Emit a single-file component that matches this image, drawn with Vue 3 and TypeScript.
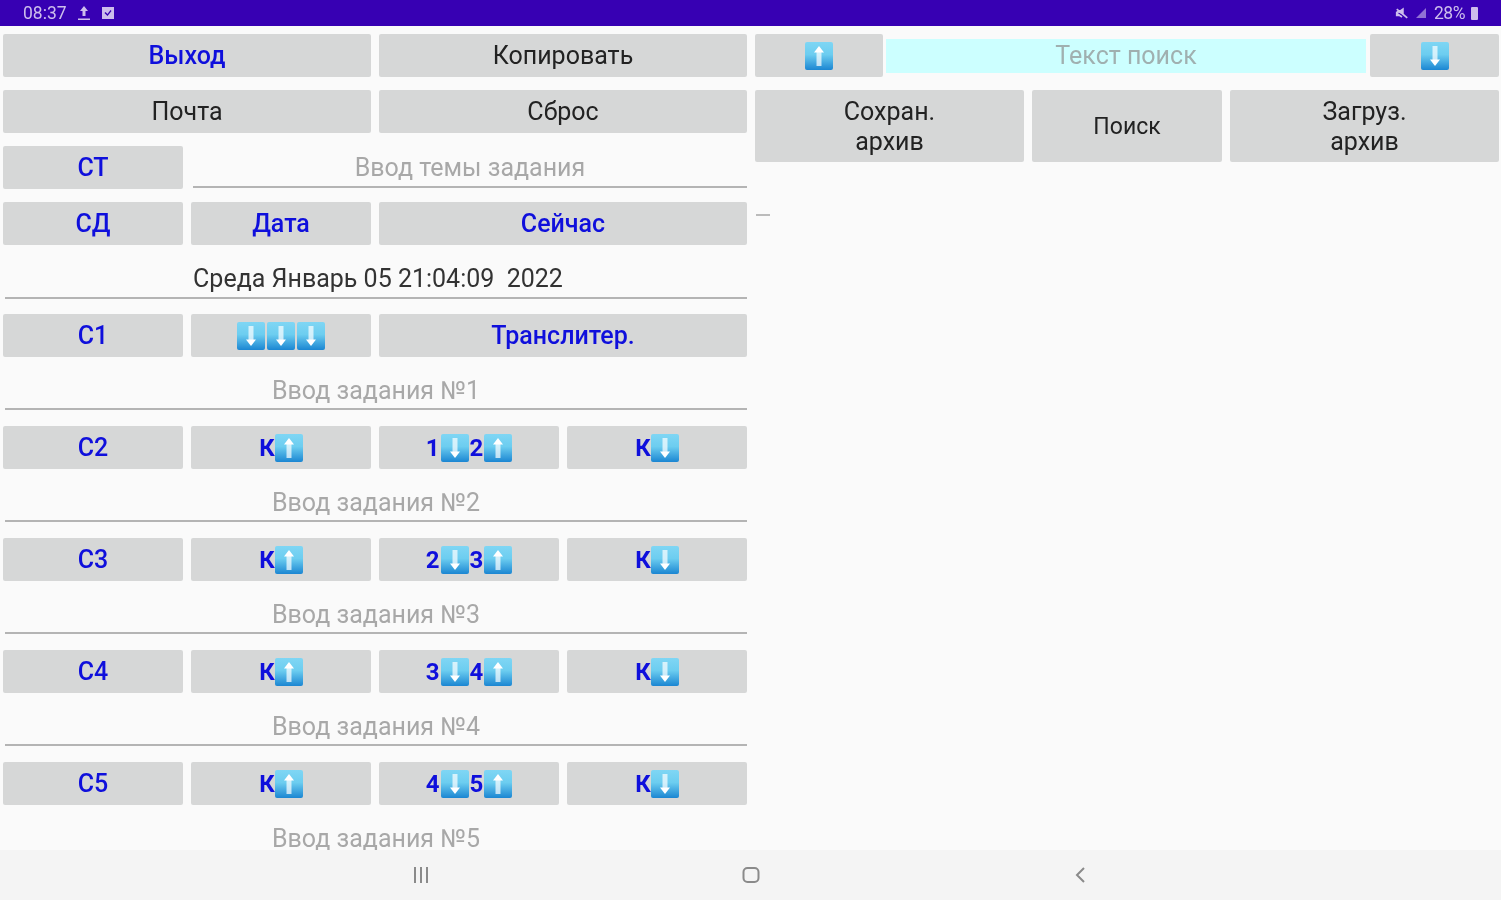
<script setup lang="ts">
interface TaskRow {
  n: number
  from: number
  to: number
}

const tasks: TaskRow[] = [
  { n: 2, from: 1, to: 2 },
  { n: 3, from: 2, to: 3 },
  { n: 4, from: 3, to: 4 },
  { n: 5, from: 4, to: 5 }
]

// shaft and head of the blue arrow tiles
const downShaft = 'M11.5 4h5v14h-5z'
const downHead = 'M14 24l-5-6.500h10z'
const upShaft = 'M11.5 10h5v14h-5z'
const upHead = 'M14 4l5 6.500H9z'
</script>

<template>
  <div class="screen">
    <header class="status">
      <div class="status-left">
        <span>08:37</span>
        <svg viewBox="0 0 14 16" width="14" height="16">
          <path d="M7 1 3 6h2.500v5h3V6H11zM1 13.500h12V15H1z" fill="currentColor" />
        </svg>
        <svg viewBox="0 0 14 14" width="14" height="14">
          <path fill-rule="evenodd" d="M1 1h12v12H1zM3.500 7l1-1 2 2 3-4 1 1-4 5z" fill="currentColor" />
        </svg>
      </div>
      <div class="status-right">
        <svg viewBox="0 0 16 14" width="14" height="13">
          <path d="M2 2 14 12M2 5h3l4-3v6M2 5v4h3l3 2" stroke="currentColor" stroke-width="2" fill="currentColor" />
        </svg>
        <svg class="dim" viewBox="0 0 12 12" width="12" height="12">
          <path d="M11 1v10H1z" fill="currentColor" />
        </svg>
        <span class="pct">28%</span>
        <span class="battery"></span>
      </div>
    </header>

    <main class="content">
      <section class="left">
        <button class="btn blue span2">Выход</button>
        <button class="btn span2">Копировать</button>
        <button class="btn span2">Почта</button>
        <button class="btn span2">Сброс</button>

        <button class="btn blue">СТ</button>
        <div class="field span3 topic">Ввод темы задания</div>

        <button class="btn blue">СД</button>
        <button class="btn blue">Дата</button>
        <button class="btn blue span2">Сейчас</button>
        <div class="field span4 date">Среда Январь 05 21:04:09&nbsp; 2022</div>

        <button class="btn blue">С1</button>
        <button class="btn triple">
          <i v-for="k in 3" :key="k" class="arrow">
            <svg viewBox="0 0 28 28"><path class="shaft" :d="downShaft" /><path :d="downHead" /></svg>
          </i>
        </button>
        <button class="btn blue span2">Транслитер.</button>
        <div class="field span4 task">Ввод задания №1</div>

        <template v-for="t in tasks" :key="t.n">
          <button class="btn blue">С{{ t.n }}</button>
          <button class="btn blue bold">
            К<i class="arrow"><svg viewBox="0 0 28 28"><path class="shaft" :d="upShaft" /><path :d="upHead" /></svg></i>
          </button>
          <button class="btn blue bold pair">
            {{ t.from }}<i class="arrow"><svg viewBox="0 0 28 28"><path class="shaft" :d="downShaft" /><path :d="downHead" /></svg></i>{{ t.to }}<i class="arrow"><svg viewBox="0 0 28 28"><path class="shaft" :d="upShaft" /><path :d="upHead" /></svg></i>
          </button>
          <button class="btn blue bold">
            К<i class="arrow"><svg viewBox="0 0 28 28"><path class="shaft" :d="downShaft" /><path :d="downHead" /></svg></i>
          </button>
          <div class="field span4 task">Ввод задания №{{ t.n }}</div>
        </template>
      </section>

      <section class="right">
        <div class="search-row">
          <button class="btn">
            <i class="arrow"><svg viewBox="0 0 28 28"><path class="shaft" :d="upShaft" /><path :d="upHead" /></svg></i>
          </button>
          <div class="search">Текст поиск</div>
          <button class="btn wide">
            <i class="arrow"><svg viewBox="0 0 28 28"><path class="shaft" :d="downShaft" /><path :d="downHead" /></svg></i>
          </button>
        </div>
        <div class="archive-row">
          <button class="btn tall">Сохран.<br />архив</button>
          <button class="btn tall small">Поиск</button>
          <button class="btn tall">Загруз.<br />архив</button>
        </div>
        <div class="dash"></div>
      </section>
    </main>

    <footer class="nav">
      <svg viewBox="0 0 18 18" width="18" height="18" class="nav-recent">
        <path d="M3 1v16M9 1v16M15 1v16" stroke="currentColor" stroke-width="2" fill="none" />
      </svg>
      <svg viewBox="0 0 18 18" width="18" height="18" class="nav-home">
        <rect x="1.500" y="2" width="15" height="14" rx="4" stroke="currentColor" stroke-width="2" fill="none" />
      </svg>
      <svg viewBox="0 0 18 18" width="18" height="18" class="nav-back">
        <path d="M12 2 5 9l7 7" stroke="currentColor" stroke-width="2" fill="none" />
      </svg>
    </footer>
  </div>
</template>

<style scoped>
.screen {
  width: 1501px;
  height: 900px;
  display: flex;
  flex-direction: column;
  overflow: hidden;
  background: #fafafa;
  font-family: Roboto, "Liberation Sans", sans-serif;
  filter: blur(0.7px);
}

.status {
  height: 26px;
  flex: none;
  display: flex;
  justify-content: space-between;
  align-items: center;
  padding: 0 23px;
  background: #3700b3;
  color: #cdbdec;
  font-size: 17.5px;
}

.status-left,
.status-right {
  display: flex;
  align-items: center;
  gap: 10px;
}

.status-right {
  gap: 5px;
}

.dim {
  opacity: 0.6;
  margin: 0 2px 0 1px;
}

.pct {
  letter-spacing: -0.5px;
}

.battery {
  width: 7px;
  height: 13px;
  margin-left: 1px;
  background: #cdbdec;
  border-radius: 1px;
}

.content {
  flex: 1;
  min-height: 0;
  display: grid;
  grid-template-columns: 744px 744px;
  column-gap: 8px;
  align-items: start;
  padding: 8px 2px 0 3px;
  overflow: hidden;
}

.left {
  display: grid;
  grid-template-columns: repeat(4, 180px);
  grid-auto-rows: 43px;
  gap: 13px 8px;
}

.span2 {
  grid-column: span 2;
}

.span3 {
  grid-column: span 3;
}

.span4 {
  grid-column: span 4;
}

.btn {
  border: none;
  padding: 1px 0 0;
  height: 43px;
  display: flex;
  align-items: center;
  justify-content: center;
  background: #d6d7d7;
  border-radius: 2px;
  color: #222;
  font-family: inherit;
  font-size: 25px;
  line-height: 30px;
  text-align: center;
}

.blue {
  color: #0f0fdc;
  font-weight: 500;
}

.bold {
  font-size: 24px;
  font-weight: 700;
}

.pair {
  gap: 1px;
}

.triple {
  gap: 2px;
}

.arrow {
  display: block;
  flex: none;
  width: 28px;
  height: 28px;
  border-radius: 2px;
  background: linear-gradient(#7fd6f4, #6ccdf0 45%, #1b86d2);
}

.arrow svg {
  display: block;
  width: 28px;
  height: 28px;
  fill: #fff;
}

.shaft {
  opacity: 0.7;
}

.field {
  box-sizing: border-box;
  align-self: start;
  margin-left: 2px;
  padding-top: 2px;
  display: flex;
  align-items: center;
  justify-content: center;
  border-bottom: 2px solid #b4b4b4;
  color: #a8a8a8;
  font-size: 25px;
}

.topic {
  height: 42px;
}

.date {
  height: 41px;
  padding-left: 4px;
  color: #333;
}

.task {
  height: 40px;
  padding-top: 3px;
}

.right {
  display: flex;
  flex-direction: column;
}

.search-row {
  display: flex;
  align-items: center;
}

.search-row .btn {
  flex: none;
  width: 128px;
}

.search-row .wide {
  width: 129px;
}

.search {
  flex: 1;
  height: 34px;
  margin: 0 4px 0 3px;
  display: flex;
  align-items: center;
  justify-content: center;
  background: #ccffff;
  color: #a0b0b0;
  font-size: 25px;
}

.archive-row {
  display: grid;
  grid-template-columns: 269px 190px 269px;
  gap: 8px;
  margin-top: 13px;
}

.tall {
  height: 72px;
}

.small {
  font-size: 23px;
}

.dash {
  width: 14px;
  height: 2px;
  margin: 52px 0 0 1px;
  background: #bbb;
}

.nav {
  height: 50px;
  flex: none;
  position: relative;
  background: #f4f4f4;
  color: #8a8a8a;
}

.nav svg {
  position: absolute;
  top: 16px;
}

.nav-recent {
  left: 412px;
}

.nav-home {
  left: 742px;
}

.nav-back {
  left: 1072px;
}
</style>
